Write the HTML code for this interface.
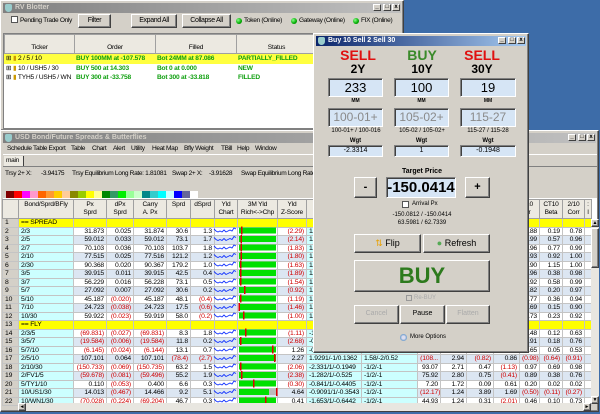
<!DOCTYPE html>
<html><head><meta charset="utf-8">
<style>
*{box-sizing:border-box;margin:0;padding:0}
body{width:600px;height:414px;overflow:hidden;background:#3d6ca8;font-family:"Liberation Sans",sans-serif;font-size:7px;position:relative;color:#000}
.abs{position:absolute}
.t{letter-spacing:-0.35px;font-size:6.6px}
.win{position:absolute;background:#d4d0c8;border:1px solid #fff;border-right-color:#404040;border-bottom-color:#404040;box-shadow:inset -1px -1px #808080}
.tb{position:absolute;left:2px;right:2px;top:2px;height:10px;background:linear-gradient(90deg,#808080,#c0c0c0);color:#d4d0c8;font-weight:bold;font-size:7px;line-height:10px;padding-left:12px}
.tb.act{background:linear-gradient(90deg,#0a246a,#a6caf0);color:#fff}
.tb i{position:absolute;left:2px;top:1px;width:7px;height:8px;background:#9cc;border-radius:2px 2px 4px 4px}
.cb{position:absolute;top:1px;width:8px;height:7px;background:#d4d0c8;border:1px solid #fff;border-right-color:#404040;border-bottom-color:#404040;font-size:6px;line-height:5px;text-align:center;color:#000;font-weight:bold}
.btn{position:absolute;background:#d4d0c8;border:1px solid #fff;border-right-color:#404040;border-bottom-color:#404040;box-shadow:inset -1px -1px #808080;text-align:center;font-size:7px}
.dot{position:absolute;width:6px;height:6px;border-radius:50%;background:radial-gradient(circle at 35% 35%,#8f8,#0a0 60%,#060)}
.box{position:absolute;background:#d6e5f5;border:1px solid #808080;border-right-color:#fff;border-bottom-color:#fff;box-shadow:inset 1px 1px #404040;text-align:center}
.c{position:absolute;text-align:center}
table{border-collapse:collapse;table-layout:fixed;position:absolute}
td{border:1px solid #c4c4c4;height:8.5px;line-height:7px;font-size:6.8px;padding:0 2px;white-space:nowrap;overflow:hidden;text-align:right;letter-spacing:-0.2px}
tr.o td{background:#dce6f2}
tr.e td{background:#fff}
td.n{background:#d4d0c8!important;text-align:left;padding-left:2px}
td.b{background:#ccffff!important;text-align:left}
td.cy{background:#ccffff!important;text-align:left}
td.r{color:#d00000}
tr.y td{background:#ffff00!important;text-align:left}
tr.y td.n{background:#d4d0c8!important}
th{border:1px solid #a0a0a0;background:#ece9e1;font-weight:normal;font-size:6.6px;letter-spacing:-0.2px;line-height:8px;height:19px;vertical-align:top;padding-top:1px;overflow:hidden}
.bl td{height:9.5px;font-weight:bold;color:#10a010;text-align:left;border:none;background:transparent;padding-left:2px;font-size:6.6px}
</style></head><body>

<!-- RV Blotter -->
<div class="win" style="left:0;top:0;width:404px;height:131px">
 <div class="tb"><i></i>RV Blotter<div class="cb" style="right:20px">_</div><div class="cb" style="right:10px">□</div><div class="cb" style="right:1px">x</div></div>
 <div class="abs" style="left:10px;top:15px;width:7px;height:7px;background:#fff;border:1px solid #555"></div>
 <div class="abs t" style="left:19px;top:16px">Pending Trade Only</div>
 <div class="btn t" style="left:77px;top:13px;width:33px;height:14px;line-height:12px">Filter</div>
 <div class="btn t" style="left:130px;top:13px;width:46px;height:14px;line-height:12px">Expand All</div>
 <div class="btn t" style="left:181px;top:13px;width:49px;height:14px;line-height:12px">Collapse All</div>
 <div class="dot" style="left:235px;top:17px"></div><div class="abs t" style="left:243px;top:16px">Token (Online)</div>
 <div class="dot" style="left:290px;top:17px"></div><div class="abs t" style="left:298px;top:16px">Gateway (Online)</div>
 <div class="dot" style="left:352px;top:17px"></div><div class="abs t" style="left:360px;top:16px">FIX (Online)</div>
 <div class="abs" style="left:2px;top:32px;width:398px;height:96px;background:#fff;border:1px solid #808080"></div>
 <table style="left:3px;top:33px;width:396px">
  <tr><th style="width:70px;padding-top:9px">Ticker</th><th style="width:81px;padding-top:9px">Order</th><th style="width:81px;padding-top:9px">Filled</th><th style="width:80px;padding-top:9px">Status</th><th></th></tr>
 </table>
 <table class="bl" style="left:3px;top:53px;width:396px">
  <tr style="background:#ffff40"><td style="width:70px;color:#000;font-weight:normal">⊞ <span style="color:#c90">▮</span> 2 / 5 / 10</td><td style="width:81px">BUY 100MM at -107.578</td><td style="width:81px">Bot 24MM at 87.086</td><td style="width:80px">PARTIALLY_FILLED</td><td></td></tr>
  <tr><td style="color:#000;font-weight:normal">⊞ <span style="color:#c90">▮</span> 10 / USH5 / 30</td><td>BUY 500 at 14.303</td><td>Bot 0 at 0.000</td><td>NEW</td><td></td></tr>
  <tr><td style="color:#000;font-weight:normal">⊞ <span style="color:#c90">▮</span> TYH5 / USH5 / WN</td><td>BUY 300 at -33.758</td><td>Bot 300 at -33.818</td><td>FILLED</td><td></td></tr>
 </table>
</div>

<!-- Main window -->
<div class="win" style="left:0;top:130px;width:599px;height:282px">
 <div class="tb"><i></i>USD Bond/Future Spreads &amp; Butterflies<div class="cb" style="right:20px">_</div><div class="cb" style="right:10px">□</div><div class="cb" style="right:1px">x</div></div>
 <div class="abs t" style="left:6px;top:14px">Schedule Table Export</div>
 <div class="abs t" style="left:70px;top:14px">Table</div><div class="abs t" style="left:91px;top:14px">Chart</div>
 <div class="abs t" style="left:112px;top:14px">Alert</div><div class="abs t" style="left:130px;top:14px">Utility</div>
 <div class="abs t" style="left:151px;top:14px">Heat Map</div><div class="abs t" style="left:183px;top:14px">Bfly Weight</div>
 <div class="abs t" style="left:220px;top:14px">TBill</div><div class="abs t" style="left:236px;top:14px">Help</div>
 <div class="abs t" style="left:254px;top:14px">Window</div>
 <div class="abs" style="left:2px;top:23px;width:594px;height:1px;background:#fff"></div>
 <div class="abs t" style="left:3px;top:25px;width:20px;height:10px;background:#ece9e1;border-right:1px solid #404040;padding-left:2px;line-height:10px">main</div>
 <div class="abs" style="left:2px;top:35px;width:594px;height:1px;background:#808080"></div>
 <div class="abs t" style="left:4px;top:39px">Trsy 2+ X:</div><div class="abs t" style="left:40px;top:39px">-3.94175</div>
 <div class="abs t" style="left:71px;top:39px">Trsy Equilibrium Long Rate: 1.81081</div>
 <div class="abs t" style="left:171px;top:39px">Swap 2+ X:</div><div class="abs t" style="left:208px;top:39px">-3.91628</div>
 <div class="abs t" style="left:240px;top:39px">Swap Equilibrium Long Rate:</div>
 <div class="abs" style="left:5px;top:60px;height:7px;display:flex">
  <div style="width:8px;background:#800000"></div><div style="width:8px;background:#f00"></div><div style="width:8px;background:#f0f"></div><div style="width:8px;background:#f9c"></div><div style="width:8px;background:#f60"></div><div style="width:8px;background:#f93"></div><div style="width:8px;background:#fc0"></div><div style="width:8px;background:#fc9"></div><div style="width:8px;background:#880"></div><div style="width:8px;background:#9c0"></div><div style="width:8px;background:#ff0"></div><div style="width:8px;background:#ff9"></div><div style="width:8px;background:#080"></div><div style="width:8px;background:#396"></div><div style="width:8px;background:#0e0"></div><div style="width:8px;background:#9f9"></div><div style="width:8px;background:#cfc"></div><div style="width:8px;background:#088"></div><div style="width:8px;background:#3cc"></div><div style="width:8px;background:#0ff"></div><div style="width:8px;background:#cff"></div><div style="width:8px;background:#00f"></div><div style="width:8px;background:#669"></div><div style="width:8px;background:#fff"></div>
 </div>
 <div class="abs" style="left:2px;top:67px;width:594px;height:205px;background:#fff"></div>
 <table style="left:1px;top:68px;width:589px">
  <colgroup><col style="width:16px"><col style="width:55px"><col style="width:33px"><col style="width:27px"><col style="width:33px"><col style="width:24px"><col style="width:24px"><col style="width:23px"><col style="width:40px"><col style="width:29px"><col style="width:55px"><col style="width:56px"><col style="width:23px"><col style="width:26px"><col style="width:27px"><col style="width:26px"><col style="width:20px"><col style="width:23px"><col style="width:22px"><col style="width:7px"></colgroup>
  <tr><th></th><th>Bond/Sprd/BFly</th><th>Px<br>Sprd</th><th>dPx<br>Sprd</th><th>Carry<br>A. Px</th><th>Sprd</th><th>dSprd</th><th>Yld<br>Chart</th><th>3M Yld<br>Rich&lt;-&gt;Chp</th><th>Yld<br>Z-Score</th><th></th><th></th><th></th><th></th><th></th><th></th><th>10<br>r</th><th>CT10<br>Beta</th><th>2/10<br>Corr</th><th>:<br>l</th></tr>
  <tr class="y"><td class="n">1</td><td>== SPREAD</td><td></td><td></td><td></td><td></td><td></td><td></td><td></td><td></td><td></td><td></td><td></td><td></td><td></td><td></td><td></td><td></td><td></td><td></td></tr>
  <tr class="e"><td class="n">2</td><td class="b">2/3</td><td>31.873</td><td>0.025</td><td>31.874</td><td>30.6</td><td>1.3</td><td></td><td></td><td class="r">(2.29)</td><td class="cy">1/-1/0.5</td><td class="cy"></td><td></td><td></td><td></td><td></td><td>0.88</td><td>0.19</td><td>0.78</td><td></td></tr>
  <tr class="o"><td class="n">3</td><td class="b">2/5</td><td>59.012</td><td>0.033</td><td>59.012</td><td>73.1</td><td>1.7</td><td></td><td></td><td class="r">(2.14)</td><td class="cy">1/-1/0.5</td><td class="cy"></td><td></td><td></td><td></td><td></td><td>0.99</td><td>0.57</td><td>0.96</td><td></td></tr>
  <tr class="e"><td class="n">4</td><td class="b">2/7</td><td>70.103</td><td>0.036</td><td>70.103</td><td>103.7</td><td>1.8</td><td></td><td></td><td class="r">(1.83)</td><td class="cy">1/-1/0.5</td><td class="cy"></td><td></td><td></td><td></td><td></td><td>0.96</td><td>0.77</td><td>0.99</td><td></td></tr>
  <tr class="o"><td class="n">5</td><td class="b">2/10</td><td>77.515</td><td>0.025</td><td>77.516</td><td>121.2</td><td>1.2</td><td></td><td></td><td class="r">(1.80)</td><td class="cy">1/-1/0.5</td><td class="cy"></td><td></td><td></td><td></td><td></td><td>0.93</td><td>0.92</td><td>1.00</td><td></td></tr>
  <tr class="e"><td class="n">6</td><td class="b">2/30</td><td>90.368</td><td>0.020</td><td>90.367</td><td>179.2</td><td>1.0</td><td></td><td></td><td class="r">(1.63)</td><td class="cy">1/-1/0.5</td><td class="cy"></td><td></td><td></td><td></td><td></td><td>0.90</td><td>1.15</td><td>1.00</td><td></td></tr>
  <tr class="o"><td class="n">7</td><td class="b">3/5</td><td>39.915</td><td>0.011</td><td>39.915</td><td>42.5</td><td>0.4</td><td></td><td></td><td class="r">(1.89)</td><td class="cy">1/-1/0.5</td><td class="cy"></td><td></td><td></td><td></td><td></td><td>0.96</td><td>0.38</td><td>0.98</td><td></td></tr>
  <tr class="e"><td class="n">8</td><td class="b">3/7</td><td>56.229</td><td>0.016</td><td>56.228</td><td>73.1</td><td>0.5</td><td></td><td></td><td class="r">(1.54)</td><td class="cy">1/-1/0.5</td><td class="cy"></td><td></td><td></td><td></td><td></td><td>0.92</td><td>0.58</td><td>0.99</td><td></td></tr>
  <tr class="o"><td class="n">9</td><td class="b">5/7</td><td>27.092</td><td>0.007</td><td>27.092</td><td>30.6</td><td>0.2</td><td></td><td></td><td class="r">(0.92)</td><td class="cy">1/-1/0.5</td><td class="cy"></td><td></td><td></td><td></td><td></td><td>0.82</td><td>0.20</td><td>0.97</td><td></td></tr>
  <tr class="e"><td class="n">10</td><td class="b">5/10</td><td>45.187</td><td class="r">(0.020)</td><td>45.187</td><td>48.1</td><td class="r">(0.4)</td><td></td><td></td><td class="r">(1.19)</td><td class="cy">1/-1/0.5</td><td class="cy"></td><td></td><td></td><td></td><td></td><td>0.77</td><td>0.36</td><td>0.94</td><td></td></tr>
  <tr class="o"><td class="n">11</td><td class="b">7/10</td><td>24.723</td><td class="r">(0.038)</td><td>24.723</td><td>17.5</td><td class="r">(0.6)</td><td></td><td></td><td class="r">(1.46)</td><td class="cy">1/-1/0.5</td><td class="cy"></td><td></td><td></td><td></td><td></td><td>0.69</td><td>0.15</td><td>0.90</td><td></td></tr>
  <tr class="e"><td class="n">12</td><td class="b">10/30</td><td>59.922</td><td class="r">(0.023)</td><td>59.919</td><td>58.0</td><td class="r">(0.2)</td><td></td><td></td><td class="r">(1.00)</td><td class="cy">1/-1/0.5</td><td class="cy"></td><td></td><td></td><td></td><td></td><td>0.73</td><td>0.23</td><td>0.92</td><td></td></tr>
  <tr class="y"><td class="n">13</td><td>== FLY</td><td></td><td></td><td></td><td></td><td></td><td></td><td></td><td></td><td></td><td></td><td></td><td></td><td></td><td></td><td></td><td></td><td></td><td></td></tr>
  <tr class="e"><td class="n">14</td><td class="b">2/3/5</td><td class="r">(69.831)</td><td class="r">(0.027)</td><td class="r">(69.831)</td><td>8.3</td><td>1.8</td><td></td><td></td><td class="r">(1.11)</td><td class="cy">-1.1/1/-0.4</td><td class="cy"></td><td></td><td></td><td></td><td></td><td>0.48</td><td>0.12</td><td>0.63</td><td></td></tr>
  <tr class="o"><td class="n">15</td><td class="b">3/5/7</td><td class="r">(19.584)</td><td class="r">(0.006)</td><td class="r">(19.584)</td><td>11.8</td><td>0.2</td><td></td><td></td><td class="r">(2.68)</td><td class="cy">-0.9/1/-0.4</td><td class="cy"></td><td></td><td></td><td></td><td></td><td>0.91</td><td>0.18</td><td>0.76</td><td></td></tr>
  <tr class="e"><td class="n">16</td><td class="b">5/7/10</td><td class="r">(6.145)</td><td class="r">(0.024)</td><td class="r">(6.144)</td><td>13.1</td><td>0.7</td><td></td><td></td><td>1.26</td><td class="cy">-0.9/1/-0.4</td><td class="cy"></td><td></td><td></td><td></td><td></td><td>0.65</td><td>0.05</td><td>0.53</td><td></td></tr>
  <tr class="o"><td class="n">17</td><td class="b">2/5/10</td><td>107.101</td><td>0.064</td><td>107.101</td><td class="r">(78.4)</td><td class="r">(2.7)</td><td></td><td></td><td>2.27</td><td class="cy">1.9291/-1/0.1362</td><td class="cy">1.58/-2/0.52</td><td class="r">(108...</td><td>2.94</td><td class="r">(0.82)</td><td>0.86</td><td class="r">(0.98)</td><td class="r">(0.64)</td><td class="r">(0.91)</td><td></td></tr>
  <tr class="e"><td class="n">18</td><td class="b">2/10/30</td><td class="r">(150.733)</td><td class="r">(0.069)</td><td class="r">(150.735)</td><td>63.2</td><td>1.5</td><td></td><td></td><td class="r">(2.06)</td><td class="cy">-2.331/1/-0.1949</td><td class="cy">-1/2/-1</td><td>93.07</td><td>2.71</td><td>0.47</td><td class="r">(1.13)</td><td>0.97</td><td>0.69</td><td>0.98</td><td></td></tr>
  <tr class="o"><td class="n">19</td><td class="b">2/FV1/5</td><td class="r">(59.678)</td><td class="r">(0.081)</td><td class="r">(59.496)</td><td>55.2</td><td>1.9</td><td></td><td></td><td class="r">(2.38)</td><td class="cy">-1.282/1/-0.525</td><td class="cy">-1/2/-1</td><td>75.92</td><td>2.80</td><td>0.75</td><td class="r">(0.41)</td><td>0.89</td><td>0.38</td><td>0.76</td><td></td></tr>
  <tr class="e"><td class="n">20</td><td class="b">5/TY1/10</td><td>0.110</td><td class="r">(0.053)</td><td>0.400</td><td>6.6</td><td>0.3</td><td></td><td></td><td class="r">(0.30)</td><td class="cy">-0.841/1/-0.4405</td><td class="cy">-1/2/-1</td><td>7.20</td><td>1.72</td><td>0.09</td><td>0.61</td><td>0.20</td><td>0.02</td><td>0.02</td><td></td></tr>
  <tr class="o"><td class="n">21</td><td class="b">10/US1/30</td><td>14.013</td><td class="r">(0.467)</td><td>14.466</td><td>9.2</td><td>5.1</td><td></td><td></td><td>4.64</td><td class="cy">-0.9091/1/-0.3543</td><td class="cy">-1/2/-1</td><td class="r">(12.17)</td><td>1.24</td><td>3.89</td><td>1.69</td><td class="r">(0.50)</td><td class="r">(0.11)</td><td class="r">(0.27)</td><td></td></tr>
  <tr class="e"><td class="n">22</td><td class="b">10/WN1/30</td><td class="r">(70.028)</td><td class="r">(0.224)</td><td class="r">(69.204)</td><td>46.7</td><td>0.3</td><td></td><td></td><td>0.41</td><td class="cy">-1.653/1/-0.6442</td><td class="cy">-1/2/-1</td><td>44.93</td><td>1.24</td><td>0.31</td><td class="r">(2.01)</td><td>0.46</td><td>0.10</td><td>0.73</td><td></td></tr>
 </table>
 <svg class="abs" style="left:0;top:0" width="599" height="282">
  <defs>
   <polyline id="sp" points="0,2 2,4 4,5 6,4 8,5 10,3 12,5 14,4 16,3 18,4 20,1 22,2" fill="none" stroke="#1030ff" stroke-width="0.9"/>
  </defs>
  <g transform="translate(213,96)">
   <use href="#sp" y="0"/><use href="#sp" y="8.5"/><use href="#sp" y="17"/><use href="#sp" y="25.5"/><use href="#sp" y="34"/><use href="#sp" y="42.5"/><use href="#sp" y="51"/><use href="#sp" y="59.5"/><use href="#sp" y="68"/><use href="#sp" y="76.5"/><use href="#sp" y="85"/>
   <use href="#sp" y="102"/><use href="#sp" y="110.5"/><use href="#sp" y="119"/><use href="#sp" y="127.5"/><use href="#sp" y="136"/><use href="#sp" y="144.5"/><use href="#sp" y="153"/><use href="#sp" y="161.5"/><use href="#sp" y="170"/>
  </g>
  <g fill="#00e000">
   <rect x="238" y="96.5" width="37" height="6"/><rect x="238" y="105" width="37" height="6"/><rect x="238" y="113.5" width="37" height="6"/><rect x="238" y="122" width="37" height="6"/><rect x="238" y="130.5" width="37" height="6"/><rect x="238" y="139" width="37" height="6"/><rect x="238" y="147.5" width="37" height="6"/><rect x="238" y="156" width="37" height="6"/><rect x="238" y="164.5" width="37" height="6"/><rect x="238" y="173" width="37" height="6"/><rect x="238" y="181.5" width="37" height="6"/>
   <rect x="238" y="198.5" width="37" height="6"/><rect x="238" y="207" width="37" height="6"/><rect x="238" y="215.5" width="37" height="6"/><rect x="238" y="224" width="37" height="6"/><rect x="238" y="232.5" width="37" height="6"/><rect x="238" y="241" width="37" height="6"/><rect x="238" y="249.5" width="37" height="6"/><rect x="238" y="258" width="30" height="6"/><rect x="238" y="266.5" width="37" height="6"/>
  </g>
  <rect x="268" y="258" width="7" height="6" fill="#bbb"/>
  <g fill="#e00000">
   <rect x="240" y="95.5" width="1.5" height="8"/><rect x="239.5" y="104" width="1.5" height="8"/><rect x="239.5" y="112.5" width="1.5" height="8"/><rect x="239.5" y="121" width="1.5" height="8"/><rect x="239" y="129.5" width="1.5" height="8"/><rect x="239" y="138" width="1.5" height="8"/><rect x="239" y="146.5" width="1.5" height="8"/><rect x="243" y="155" width="1.5" height="8"/><rect x="239" y="163.5" width="1.5" height="8"/><rect x="237.5" y="172" width="1.5" height="8"/><rect x="242" y="180.5" width="1.5" height="8"/>
   <rect x="244" y="197.5" width="1.5" height="8"/><rect x="239" y="206" width="1.5" height="8"/><rect x="271" y="214.5" width="1.5" height="8"/><rect x="273" y="223" width="1.5" height="8"/><rect x="239" y="231.5" width="1.5" height="8"/><rect x="240" y="240" width="1.5" height="8"/><rect x="252" y="248.5" width="1.5" height="8"/><rect x="275" y="257" width="1.5" height="8"/><rect x="264" y="265.5" width="1.5" height="8"/>
  </g>
 </svg>
 <div class="abs" style="left:590px;top:88px;width:8px;height:185px;background:#e8e6e0"></div>
 <div class="btn" style="left:590px;top:88px;width:8px;height:8px;font-size:5px;line-height:6px">▲</div>
 <div class="btn" style="left:590px;top:97px;width:8px;height:40px"></div>
 <div class="btn" style="left:590px;top:265px;width:8px;height:8px;font-size:5px;line-height:6px">▼</div>
 <div class="abs" style="left:17px;top:272px;width:573px;height:8px;background:#e8e6e0"></div>
 <div class="btn" style="left:17px;top:272px;width:8px;height:8px;font-size:5px;line-height:6px">◄</div>
 <div class="btn" style="left:582px;top:272px;width:8px;height:8px;font-size:5px;line-height:6px">►</div>
</div>

<!-- Dialog -->
<div class="win" style="left:313px;top:33px;width:216px;height:320px;z-index:5">
 <div class="tb act"><i></i>Buy 10 Sell 2 Sell 30<div class="cb" style="right:20px">_</div><div class="cb" style="right:10px">□</div><div class="cb" style="right:1px">x</div></div>
 <div class="c" style="left:14px;width:60px;top:13px;font-size:14px;font-weight:bold;color:#e01010">SELL</div>
 <div class="c" style="left:78px;width:60px;top:13px;font-size:14px;font-weight:bold;color:#3a8a2a">BUY</div>
 <div class="c" style="left:138px;width:60px;top:13px;font-size:14px;font-weight:bold;color:#e01010">SELL</div>
 <div class="c" style="left:14px;width:60px;top:28px;font-size:12px;font-weight:bold">2Y</div>
 <div class="c" style="left:78px;width:60px;top:28px;font-size:12px;font-weight:bold">10Y</div>
 <div class="c" style="left:138px;width:60px;top:28px;font-size:12px;font-weight:bold">30Y</div>
 <div class="box" style="left:14px;top:44px;width:55px;height:19px;font-size:13px;line-height:17px">233</div>
 <div class="box" style="left:80px;top:44px;width:55px;height:19px;font-size:13px;line-height:17px">100</div>
 <div class="box" style="left:146px;top:44px;width:56px;height:19px;font-size:13px;line-height:17px">19</div>
 <div class="c" style="left:14px;width:55px;top:64px;font-size:5px;font-weight:bold">MM</div>
 <div class="c" style="left:80px;width:55px;top:64px;font-size:5px;font-weight:bold">MM</div>
 <div class="c" style="left:146px;width:56px;top:64px;font-size:5px;font-weight:bold">MM</div>
 <div class="box" style="left:14px;top:74px;width:55px;height:19px;font-size:12px;line-height:17px;color:#8a8a8a">100-01+</div>
 <div class="box" style="left:80px;top:74px;width:55px;height:19px;font-size:12px;line-height:17px;color:#8a8a8a">105-02+</div>
 <div class="box" style="left:146px;top:74px;width:56px;height:19px;font-size:12px;line-height:17px;color:#8a8a8a">115-27</div>
 <div class="c" style="left:8px;width:68px;top:94px;font-size:6px">100-01+ / 100-016</div>
 <div class="c" style="left:74px;width:68px;top:94px;font-size:6px">105-02 / 105-02+</div>
 <div class="c" style="left:140px;width:68px;top:94px;font-size:6px">115-27 / 115-28</div>
 <div class="c" style="left:14px;width:55px;top:104px;font-size:6px;font-weight:bold">Wgt</div>
 <div class="c" style="left:80px;width:55px;top:104px;font-size:6px;font-weight:bold">Wgt</div>
 <div class="c" style="left:146px;width:56px;top:104px;font-size:6px;font-weight:bold">Wgt</div>
 <div class="box" style="left:14px;top:111px;width:55px;height:12px;font-size:7px;line-height:10px">-2.3314</div>
 <div class="box" style="left:80px;top:111px;width:55px;height:12px;font-size:7px;line-height:10px">1</div>
 <div class="box" style="left:146px;top:111px;width:56px;height:12px;font-size:7px;line-height:10px">-0.1948</div>
 <div class="c" style="left:70px;width:76px;top:134px;font-size:7px;font-weight:bold">Target Price</div>
 <div class="btn" style="left:40px;top:143px;width:23px;height:21px;font-size:11px;line-height:18px;font-weight:bold">-</div>
 <div class="box" style="left:72px;top:143px;width:70px;height:21px;font-size:15px;line-height:19px;font-weight:bold">-150.0414</div>
 <div class="btn" style="left:151px;top:143px;width:25px;height:21px;font-size:11px;line-height:18px;font-weight:bold">+</div>
 <div class="abs" style="left:88px;top:167px;width:7px;height:7px;background:#fff;border:1px solid #555"></div>
 <div class="abs" style="left:98px;top:167px;font-size:6px">Arrival Px</div>
 <div class="c" style="left:50px;width:116px;top:178px;font-size:6px">-150.0812 / -150.0414</div>
 <div class="c" style="left:50px;width:116px;top:186px;font-size:6px">63.5981 / 62.7339</div>
 <div class="btn" style="left:40px;top:200px;width:67px;height:19px;font-size:9px;line-height:16px"><span style="color:#e8a000">⇅</span> Flip</div>
 <div class="btn" style="left:109px;top:200px;width:67px;height:19px;font-size:9px;line-height:16px"><span style="color:#5a5">●</span> Refresh</div>
 <div class="btn" style="left:40px;top:226px;width:136px;height:32px;font-size:22px;line-height:29px;font-weight:bold;color:#2d7a1d">BUY</div>
 <div class="abs" style="left:92px;top:261px;width:6px;height:6px;border:1px solid #999"></div>
 <div class="abs" style="left:100px;top:261px;font-size:6px;color:#aaa">Re-BUY</div>
 <div class="btn" style="left:40px;top:271px;width:45px;height:19px;font-size:7px;line-height:16px;color:#aaa">Cancel</div>
 <div class="btn" style="left:86px;top:271px;width:45px;height:19px;font-size:7px;line-height:16px">Pause</div>
 <div class="btn" style="left:132px;top:271px;width:44px;height:19px;font-size:7px;line-height:16px;color:#aaa">Flatten</div>
 <div class="abs" style="left:86px;top:300px;width:7px;height:7px;border-radius:50%;background:radial-gradient(circle,#dde 30%,#69c 70%)"></div>
 <div class="abs" style="left:96px;top:300px;font-size:6px">More Options</div>
</div>
</body></html>
